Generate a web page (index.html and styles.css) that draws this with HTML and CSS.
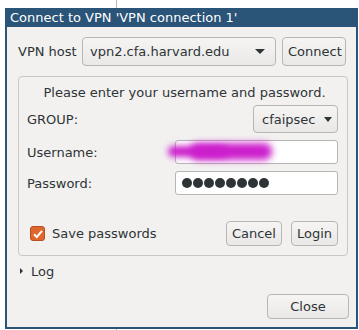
FILE: index.html
```html
<!DOCTYPE html>
<html lang="en">
<head>
    <meta charset="UTF-8">
    <title>Connect to VPN</title>
    <link rel="stylesheet" href="styles.css">
</head>
<body>
    <div class="window">
        <div class="titlebar">Connect to VPN 'VPN connection 1'</div>
        <div class="content">
            <div class="host-row">
                <span class="host-label">VPN host</span>
                <div class="combo host-combo">
                    <span>vpn2.cfa.harvard.edu</span>
                    <span class="arrow"></span>
                </div>
                <button class="button connect">Connect</button>
            </div>

            <div class="frame">
                <div class="prompt">Please enter your username and password.</div>
                <div class="form-row">
                    <span class="label">GROUP:</span>
                    <div class="combo group-combo">
                        <span>cfaipsec</span>
                        <span class="arrow"></span>
                    </div>
                </div>
                <div class="form-row">
                    <span class="label">Username:</span>
                    <div class="entry">
                        <span class="smudge"></span>
                        <span class="smudge wide"></span>
                    </div>
                </div>
                <div class="form-row">
                    <span class="label">Password:</span>
                    <div class="entry dots">
                        <span class="dot"></span><span class="dot"></span><span class="dot"></span><span class="dot"></span>
                        <span class="dot"></span><span class="dot"></span><span class="dot"></span><span class="dot"></span>
                    </div>
                </div>
                <div class="action-row">
                    <label class="check">
                        <span class="checkbox">
                            <svg width="12" height="12" viewBox="0 0 12 12"><path d="M2 6.2 L4.8 9 L10 2.8" fill="none" stroke="#fff" stroke-width="2"/></svg>
                        </span>
                        Save passwords
                    </label>
                    <button class="button">Cancel</button>
                    <button class="button">Login</button>
                </div>
            </div>

            <div class="log"><span class="expander"></span>Log</div>

            <div class="bottom-row">
                <button class="button close">Close</button>
            </div>
        </div>
    </div>
</body>
</html>
```

FILE: styles.css
```css
html, body {
    margin: 0;
    height: 100%;
}
body {
    font-family: "DejaVu Sans", sans-serif;
    font-size: 13px;
    color: #2e3436;
    background: #fff linear-gradient(#b8b8b8, #b8b8b8) no-repeat 116px 0 / 1px 100%;
    padding: 8px 1px 1px 5px;
    box-sizing: border-box;
}
.window {
    width: 353px;
    height: 321px;
    box-sizing: border-box;
    border: 2px solid #2a5478;
    border-top: none;
    background: #f2f1f0;
    display: flex;
    flex-direction: column;
}
.titlebar {
    background: #2a5478;
    color: #fff;
    height: 19px;
    line-height: 20px;
    padding-left: 3px;
    font-size: 13px;
}
.content {
    flex: 1;
    display: flex;
    flex-direction: column;
    padding: 10px 8px 8px 11px;
}
.host-row {
    display: flex;
    align-items: center;
    height: 29px;
}
.host-label {
    width: 64px;
}
.combo {
    display: flex;
    align-items: center;
    justify-content: space-between;
    box-sizing: border-box;
    border: 1px solid #b6b6b3;
    border-radius: 4px;
    background: linear-gradient(#f6f5f4, #e9e8e7);
}
.host-combo {
    width: 194px;
    height: 29px;
    padding: 0 10px 0 7px;
}
.arrow {
    width: 0;
    height: 0;
    border-left: 5px solid transparent;
    border-right: 5px solid transparent;
    border-top: 5px solid #2e3436;
}
.button {
    font: inherit;
    color: #2e3436;
    border: 1px solid #b6b6b3;
    border-radius: 4px;
    background: linear-gradient(#f6f5f4, #e9e8e7);
    padding: 0 5px;
    box-sizing: border-box;
}
.connect {
    width: 64px;
    height: 29px;
    margin-left: 6px;
}
.frame {
    margin-top: 10px;
    width: 330px;
    height: 180px;
    box-sizing: border-box;
    border: 1px solid #cdc7c2;
    border-radius: 4px;
    padding: 6px 9px 9px 8px;
    display: flex;
    flex-direction: column;
}
.prompt {
    text-align: center;
    height: 20px;
    line-height: 20px;
    padding-left: 4px;
}
.form-row {
    display: flex;
    align-items: center;
    justify-content: space-between;
    margin-top: 7px;
}
.form-row:nth-child(2) {
    margin-top: 2px;
}
.group-combo {
    width: 85px;
    height: 28px;
    padding: 0 5px 0 8px;
}
.group-combo .arrow {
    border-left-width: 4.5px;
    border-right-width: 4.5px;
    border-top-width: 5px;
}
.entry {
    position: relative;
    width: 163px;
    height: 24px;
    box-sizing: border-box;
    border: 1px solid #b6b6b3;
    border-radius: 3px;
    background: #fff;
}
.smudge {
    position: absolute;
    left: -8px;
    top: 5px;
    width: 60px;
    height: 11px;
    border-radius: 8px;
    background: #cc1fcc;
    filter: blur(3px);
}
.smudge.wide {
    left: 14px;
    top: 2px;
    width: 82px;
    height: 17px;
    filter: blur(3.5px);
}
.dots {
    display: flex;
    align-items: center;
    gap: 1px;
    padding-left: 6px;
}
.dot {
    width: 10px;
    height: 10px;
    border-radius: 50%;
    background: #2e3436;
}
.action-row {
    display: flex;
    align-items: center;
    margin-top: auto;
    height: 25px;
}
.check {
    flex: 1;
    display: flex;
    align-items: center;
    gap: 7px;
    padding-left: 3px;
}
.checkbox {
    width: 15px;
    height: 15px;
    border-radius: 3px;
    background: #e0662d;
    border: 1px solid #b64f1f;
    box-sizing: border-box;
    display: flex;
    align-items: center;
    justify-content: center;
}
.action-row .button {
    height: 25px;
    margin-left: 9px;
}
.log {
    display: flex;
    align-items: center;
    margin-top: 7px;
    height: 16px;
    padding-left: 2px;
}
.expander {
    width: 0;
    height: 0;
    border-top: 3px solid transparent;
    border-bottom: 3px solid transparent;
    border-left: 3px solid #2e3436;
    margin-right: 8px;
}
.bottom-row {
    margin-top: auto;
    display: flex;
    justify-content: flex-end;
}
.close {
    width: 82px;
    height: 25px;
    margin-right: -1px;
}
```
